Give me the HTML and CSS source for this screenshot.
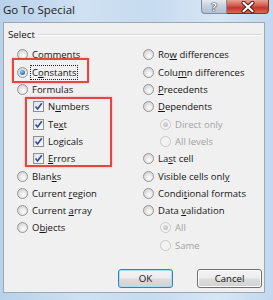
FILE: index.html
```html
<!DOCTYPE html>
<html>
<head>
<meta charset="utf-8">
<link rel="stylesheet" href="styles.css">
</head>
<body>
<div class="window">
  <div class="titlebar">
    <div class="title">Go To Special</div>
    <div class="controls">
      <div class="tb-btn help">?</div>
      <div class="tb-btn close">
        <svg width="16" height="12" viewBox="0 0 16 12"><path d="M3.5 1.8 L12.5 10.2 M12.5 1.8 L3.5 10.2" stroke="#3a1a14" stroke-width="4" stroke-linecap="round"/><path d="M3.5 1.8 L12.5 10.2 M12.5 1.8 L3.5 10.2" stroke="#fff" stroke-width="2.2" stroke-linecap="round"/></svg>
      </div>
    </div>
  </div>
  <div class="client">
    <div class="legend"><span class="legend-text">Select</span><span class="legend-line"></span></div>
    <div class="cols">
      <div class="col left">
        <div class="row"><span class="radio"></span><span>Comments</span></div>
        <div class="row"><span class="radio on"></span><span class="focus">C<u>o</u>nstants</span></div>
        <div class="row"><span class="radio"></span><span>Formulas</span></div>
        <div class="row sub"><span class="check"><svg width="9" height="9" viewBox="0 0 9 9"><path d="M1.5 4.5 L3.6 7 L7.8 1.2" fill="none" stroke="#2c4c9c" stroke-width="1.6"/></svg></span><span>N<u>u</u>mbers</span></div>
        <div class="row sub"><span class="check"><svg width="9" height="9" viewBox="0 0 9 9"><path d="M1.5 4.5 L3.6 7 L7.8 1.2" fill="none" stroke="#2c4c9c" stroke-width="1.6"/></svg></span><span>Te<u>x</u>t</span></div>
        <div class="row sub"><span class="check"><svg width="9" height="9" viewBox="0 0 9 9"><path d="M1.5 4.5 L3.6 7 L7.8 1.2" fill="none" stroke="#2c4c9c" stroke-width="1.6"/></svg></span><span>Lo<u>g</u>icals</span></div>
        <div class="row sub"><span class="check"><svg width="9" height="9" viewBox="0 0 9 9"><path d="M1.5 4.5 L3.6 7 L7.8 1.2" fill="none" stroke="#2c4c9c" stroke-width="1.6"/></svg></span><span><u>E</u>rrors</span></div>
        <div class="row"><span class="radio"></span><span>Blan<u>k</u>s</span></div>
        <div class="row"><span class="radio"></span><span>Current <u>r</u>egion</span></div>
        <div class="row"><span class="radio"></span><span>Current <u>a</u>rray</span></div>
        <div class="row"><span class="radio"></span><span>O<u>b</u>jects</span></div>
      </div>
      <div class="col right">
        <div class="row"><span class="radio"></span><span>Ro<u>w</u> differences</span></div>
        <div class="row"><span class="radio"></span><span>Colu<u>m</u>n differences</span></div>
        <div class="row"><span class="radio"></span><span><u>P</u>recedents</span></div>
        <div class="row"><span class="radio"></span><span><u>D</u>ependents</span></div>
        <div class="row sub2 dis"><span class="radio on"></span><span>Direct only</span></div>
        <div class="row sub2 dis"><span class="radio"></span><span>All levels</span></div>
        <div class="row"><span class="radio"></span><span>La<u>s</u>t cell</span></div>
        <div class="row"><span class="radio"></span><span>Visible cells onl<u>y</u></span></div>
        <div class="row"><span class="radio"></span><span>Condi<u>t</u>ional formats</span></div>
        <div class="row"><span class="radio"></span><span>Data <u>v</u>alidation</span></div>
        <div class="row sub2 dis"><span class="radio on"></span><span>All</span></div>
        <div class="row sub2 dis"><span class="radio"></span><span>Same</span></div>
      </div>
    </div>
    <div class="buttons">
      <div class="btn ok">OK</div>
      <div class="btn cancel">Cancel</div>
    </div>
    <div class="mark mark1"></div>
    <div class="mark mark2"></div>
  </div>
</div>
</body>
</html>
```
FILE: styles.css
```css
html, body {
  margin: 0;
  padding: 0;
}
body {
  width: 273px;
  height: 300px;
  overflow: hidden;
  font-family: "Open Sans", "Noto Sans", sans-serif;
}
.window {
  width: 273px;
  height: 300px;
  display: flex;
  flex-direction: column;
  background: linear-gradient(to right, #b9d1ea 0%, #cfe1f2 30%, #c6dbef 55%, #d7e6f4 80%, #c2d8ee 100%);
}
.titlebar {
  height: 22px;
  display: flex;
  align-items: flex-start;
  flex-shrink: 0;
}
.title {
  margin: 2px 0 0 3px;
  font-size: 11.5px;
  line-height: 15px;
  color: #1b1b1b;
}
.controls {
  margin-left: auto;
  margin-right: 4px;
  display: flex;
}
.tb-btn {
  height: 14px;
  display: flex;
  align-items: center;
  justify-content: center;
  box-sizing: border-box;
}
.help {
  width: 26px;
  border: 1px solid #7d8ea2;
  border-top: none;
  border-radius: 0 0 0 4px;
  background: linear-gradient(#e4eaf1, #c3cfdc 50%, #b2c1d2);
  color: #fff;
  font-weight: bold;
  font-size: 11px;
  line-height: 12px;
  text-shadow: 0 0 1px #2a3440, 0 0 1px #2a3440, 0 0 1px #2a3440;
}
.close {
  width: 42px;
  border: 1px solid #7a3328;
  border-top: none;
  border-left: none;
  border-radius: 0 0 4px 0;
  background: linear-gradient(#e7a194, #d0594a 45%, #c0382a 60%, #d76c56);
}
.client {
  position: relative;
  flex: 1;
  margin: 0 8px 7px 3px;
  border: 1px solid #9aa7b4;
  background: #f0f0f0;
  display: flex;
  flex-direction: column;
  font-size: 9.5px;
  color: #141414;
}
.legend {
  display: flex;
  align-items: center;
  height: 14px;
  margin: 5px 2px 0 4px;
}
.legend-text {
  line-height: 14px;
  font-size: 9.8px;
}
.legend-line {
  flex: 1;
  margin-left: 3px;
  height: 0;
  border-top: 1px solid #d5d5d5;
  border-bottom: 1px solid #fff;
}
.cols {
  display: grid;
  grid-template-columns: 126px 1fr;
  margin-top: 4.3px;
  padding-left: 13px;
}
.row {
  display: flex;
  align-items: center;
  height: 17.3px;
  gap: 4px;
  white-space: nowrap;
}
.row u {
  text-decoration-thickness: 1px;
  text-underline-offset: 1px;
}
.sub {
  padding-left: 16px;
}
.sub2 {
  padding-left: 17px;
}
.dis {
  color: #a3a3a3;
}
.radio {
  width: 11px;
  height: 11px;
  box-sizing: border-box;
  border-radius: 50%;
  border: 1px solid #949494;
  background: radial-gradient(circle at 60% 65%, #ffffff 0%, #e6e6e6 45%, #c6c6c6 100%);
  flex-shrink: 0;
  position: relative;
}
.radio.on::after {
  content: "";
  position: absolute;
  left: 2px;
  top: 2px;
  width: 5px;
  height: 5px;
  border-radius: 50%;
  background: radial-gradient(circle at 40% 35%, #9ed3f5 0%, #2f7cc1 55%, #174d86 100%);
}
.dis .radio {
  border-color: #c9c9c9;
  background: #f3f3f3;
}
.dis .radio.on::after {
  background: radial-gradient(circle at 40% 35%, #e0e0e0 0%, #b3b3b3 100%);
}
.check {
  width: 11px;
  height: 11px;
  box-sizing: border-box;
  border: 1px solid #8f8f8f;
  background: linear-gradient(135deg, #e2e2e2, #fbfbfb);
  display: flex;
  align-items: center;
  justify-content: center;
  flex-shrink: 0;
}
.focus {
  outline: 1px dotted #222;
  outline-offset: 0;
  padding: 0 1px;
  margin-left: -1px;
}
.buttons {
  margin-top: auto;
  margin-bottom: 4px;
  margin-right: 2px;
  display: flex;
  justify-content: flex-end;
  gap: 24px;
}
.btn {
  height: 19px;
  box-sizing: border-box;
  border-radius: 3px;
  display: flex;
  align-items: center;
  justify-content: center;
  font-size: 9.6px;
  background: linear-gradient(#f4f4f4 0%, #ececec 48%, #dcdcdc 52%, #d2d2d2 100%);
}
.ok {
  width: 55px;
  border: 1px solid #3c7fb1;
  box-shadow: inset 0 0 0 1px #a6def8;
}
.cancel {
  width: 65px;
  border: 1px solid #707070;
  box-shadow: inset 0 0 0 1px #fbfbfb;
}
.mark {
  position: absolute;
  border: 2px solid #e8453f;
  box-shadow: 0 0 2px rgba(200, 40, 40, 0.35);
}
.mark1 {
  left: 8px;
  top: 35px;
  width: 73px;
  height: 21px;
}
.mark2 {
  left: 21px;
  top: 74px;
  width: 83px;
  height: 66px;
}
```
